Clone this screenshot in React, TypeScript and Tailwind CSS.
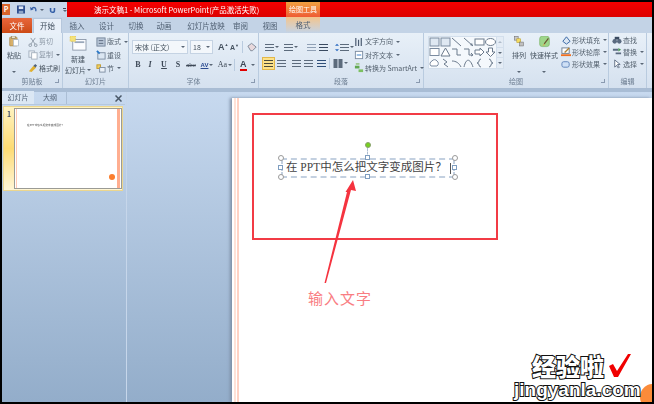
import React from "react";

const cjk = '"Noto Sans CJK SC","Liberation Sans",sans-serif';

function Ico({ w = 10, h = 10, children }: { w?: number; h?: number; children: React.ReactNode }) {
  return (
    <svg width={w} height={h} viewBox="0 0 11 11" className="shrink-0">
      {children}
    </svg>
  );
}

function Caret() {
  return <span className="inline-block w-0 h-0 border-x-[2px] border-x-transparent border-t-[2px] border-t-[#5a6776] shrink-0" />;
}

function SmallBtn({ icon, label, caret, h = "h-[14px]" }: { icon: React.ReactNode; label: string; caret?: boolean; h?: string }) {
  return (
    <div className={`flex items-center gap-[1px] ${h}`}>
      {icon}
      <span className="whitespace-nowrap">{label}</span>
      {caret && <span className="ml-[2px] flex"><Caret /></span>}
    </div>
  );
}

function Group({ w, label, launcher, children }: { w: string; label: string; launcher?: boolean; children: React.ReactNode }) {
  return (
    <div className={`${w} shrink-0 h-full flex flex-col border-r border-r-[#b9cbdf]`}>
      <div className="flex-1 flex min-h-0">{children}</div>
      <div className="h-[13px] flex items-center justify-center relative text-[7px] text-[#6b7c90]">
        {label}
        {launcher && <span className="absolute right-[3px] top-[4px] w-[4px] h-[4px] border-r border-b border-[#8a9ab0]" />}
      </div>
    </div>
  );
}

const Lines = ({ c = "#5c6b7c" }: { c?: string }) => (
  <svg width="9" height="9" viewBox="0 0 9 9" className="shrink-0">
    <path d="M0 1.500h9M0 4.500h9M0 7.500h9" stroke={c} strokeWidth="1.2" />
  </svg>
);

const tabs = [
  ["插入", "w-[30px]"],
  ["设计", "w-[29px]"],
  ["切换", "w-[30px]"],
  ["动画", "w-[26px]"],
  ["幻灯片放映", "w-[40px] ml-[9px]"],
  ["审阅", "w-[29px]"],
  ["视图", "w-[30px]"],
];

function TitleBar() {
  return (
    <div className="h-[15px] flex shrink-0">
      <div className="w-[65px] bg-[#c9d8ea] flex items-center">
        <div className="w-[8px] h-[11px] bg-[#d9642a] text-white text-[7px] leading-[11px] text-center font-bold">P</div>
        <svg width="8" height="9" viewBox="0 0 9 9" className="ml-[7px]"><rect width="9" height="9" fill="#2f4f8f" /><rect x="2" y="1" width="5" height="3" fill="#dfe8f5" /><rect x="2" y="6" width="5" height="3" fill="#8fa6c8" /></svg>
        <svg width="8" height="9" viewBox="0 0 11 9" className="ml-[5px]"><path d="M2 4c2-3 5-3 6 0v3" stroke="#3560a8" strokeWidth="1.8" fill="none" /><path d="M0 1l1 5 4-2z" fill="#3560a8" /></svg>
        <span className="ml-[2px] flex"><Caret /></span>
        <svg width="7" height="8" viewBox="0 0 9 9" className="ml-[5px]"><path d="M2 2v3a2.500 2.500 0 0 0 5 0V2" stroke="#3560a8" strokeWidth="2" fill="none" /></svg>
        <div className="ml-[6px] w-[5px] h-[10px] flex flex-col items-center justify-center gap-[1px]"><span className="w-[3px] h-[1px] bg-[#445]" /><Caret /></div>
      </div>
      <div className="flex-1 bg-gradient-to-b from-[#f50000] to-[#dc0000] flex text-white text-[7.500px]">
        <span className="ml-[27px] leading-[15px] whitespace-nowrap w-[192px]">演示文稿1 - Microsoft PowerPoint(产品激活失败)</span>
        <span className="w-[34px] text-center leading-[15px] text-[7px] bg-gradient-to-b from-[#f0a040] to-[#ee5a34]">绘图工具</span>
      </div>
    </div>
  );
}

function Tabs() {
  return (
    <div className="h-[16px] bg-[#c3d3e6] flex items-end text-[7.500px] text-[#4f5f72] shrink-0">
      <div className="w-[30px] h-[15px] bg-gradient-to-b from-[#e8663a] to-[#cc4a14] text-white flex items-center justify-center rounded-t-[1px]">文件</div>
      <div className="w-[29px] h-[15px] ml-[1px] bg-[#e9f0f9] border-x border-t border-[#b6c7dc] flex items-center justify-center text-[#3f4c5c]">开始</div>
      {tabs.map(([t, c]) => (
        <div key={t} className={`${c} h-[15px] flex items-center justify-center`}>{t}</div>
      ))}
      <div className="w-[34px] h-[16px] ml-[1px] bg-gradient-to-b from-[#f3c48a] to-[#c3d3e6] flex items-center justify-center">格式</div>
    </div>
  );
}

function Ribbon() {
  return (
    <div className="h-[56px] bg-gradient-to-b from-[#e8f0f8] to-[#d5e1ef] border-b border-b-[#a9bcd3] flex text-[7px] text-[#55626f] shrink-0">
      <Group w="w-[61px]" label="剪贴板" launcher>
        <div className="w-[24px] flex flex-col items-center pt-[3px]">
          <svg width="16" height="17" viewBox="0 0 16 17"><rect x="1" y="2" width="12" height="14" rx="1" fill="#d8b06a" stroke="#a08040" /><rect x="4" y="0" width="6" height="4" fill="#e9e3cf" stroke="#8a7a50" /><rect x="7" y="6" width="8" height="10" fill="#fff" stroke="#9fb0c4" /></svg>
          <span className="mt-[3px] leading-[10px] text-[#45525f]">粘贴</span>
          <span className="mt-[5px]"><Caret /></span>
        </div>
        <div className="flex flex-col pt-[2px] ml-[2px] text-[#8c98a6]">
          <SmallBtn label="剪切" icon={<Ico><path d="M3 1l5 7M8 1L3 8" stroke="#8c98a6" /><circle cx="2.500" cy="9" r="1.500" fill="none" stroke="#8c98a6" /><circle cx="8.500" cy="9" r="1.500" fill="none" stroke="#8c98a6" /></Ico>} />
          <SmallBtn label="复制" caret icon={<Ico><rect x="1" y="1" width="6" height="7" fill="#eef2f7" stroke="#a3afbd" /><rect x="4" y="3" width="6" height="7" fill="#fff" stroke="#a3afbd" /></Ico>} />
          <div className="text-[#4c5864]"><SmallBtn label="格式刷" icon={<Ico><path d="M1 9l5-6 3 2-5 5z" fill="#e0b030" /><path d="M6 3l2-2 2 2-2 2z" fill="#50627a" /></Ico>} /></div>
        </div>
      </Group>
      <Group w="w-[66px]" label="幻灯片">
        <div className="w-[30px] flex flex-col items-center pt-[3px]">
          <svg width="19" height="17" viewBox="0 0 19 17"><rect x="3" y="4" width="15" height="12" fill="#fbfcfe" stroke="#8a97a8" /><rect x="5" y="6" width="11" height="2" fill="#9aa8ba" /><rect x="0" y="0" width="6" height="6" fill="#f4e27a" stroke="#e6c43c" strokeDasharray="1 1" /></svg>
          <span className="mt-[3px] leading-[10px] text-[#45525f]">新建</span>
          <span className="leading-[10px] mt-[1px] whitespace-nowrap flex items-center gap-[1px] text-[#45525f]">幻灯片<Caret /></span>
        </div>
        <div className="flex flex-col pt-[2px] ml-[3px]">
          <SmallBtn label="版式" caret icon={<Ico><rect x="1" y="1" width="9" height="9" fill="#b9c7d8" stroke="#75859a" /><path d="M3 4h5M3 7h5" stroke="#56667a" /></Ico>} />
          <SmallBtn label="重设" icon={<Ico><rect x="2" y="3" width="8" height="7" fill="#dbe6f2" stroke="#7b8ba0" /><path d="M1 1l3 3" stroke="#2a78c8" strokeWidth="2" /></Ico>} />
          <SmallBtn label="节" caret icon={<Ico><rect x="1" y="2" width="4" height="4" fill="#f0d060" stroke="#c09a30" /><rect x="4" y="5" width="6" height="5" fill="#eaf0f7" stroke="#7b8ba0" /></Ico>} />
        </div>
      </Group>
      <Group w="w-[130px]" label="字体" launcher>
        <div className="flex flex-col pl-[3px] pt-[7px] gap-[5px]">
          <div className="flex items-center h-[14px]">
            <div className="w-[56px] h-[14px] bg-[#f3f7fb] border border-[#c5d3e3] flex items-center justify-between px-[2px] text-[#45525f]">宋体 (正文)<Caret /></div>
            <div className="w-[23px] h-[14px] ml-[2px] bg-[#f3f7fb] border border-[#c5d3e3] flex items-center justify-between px-[2px] text-[#45525f]">18<Caret /></div>
            <span className="ml-[5px] w-[11px] text-[9px] leading-none font-bold text-[#45525f]" style={{ fontFamily: "Liberation Sans" }}>A<span className="align-top text-[4px]">▲</span></span>
            <span className="ml-[1px] w-[9px] text-[7px] leading-none font-bold text-[#45525f]" style={{ fontFamily: "Liberation Sans" }}>A<span className="align-top text-[4px]">▼</span></span>
            <span className="ml-[3px] w-px h-[12px] bg-[#b9cbdf]" />
            <svg width="11" height="11" viewBox="0 0 12 11" className="ml-[4px]"><path d="M1 4l4-3 5 4-4 4H4z" fill="#e9d9dc" stroke="#7b8796" /></svg>
          </div>
          <div className="flex items-center h-[12px] font-bold text-[8px] text-[#3d4856]" style={{ fontFamily: "Liberation Serif" }}>
            <span className="w-[12px] text-center">B</span>
            <span className="w-[12px] text-center italic">I</span>
            <span className="w-[16px] text-center underline">U</span>
            <span className="w-[12px] text-center">S</span>
            <span className="w-[14px] text-center line-through text-[7px] font-normal">abc</span>
            <span className="w-[18px] flex items-center justify-center gap-[1px] text-[6px] text-[#2a4a90] underline" style={{ fontFamily: "Liberation Sans" }}>AV<Caret /></span>
            <span className="w-[18px] flex items-center justify-center gap-[1px] text-[8px] font-normal">Aa<Caret /></span>
            <span className="w-px h-[12px] bg-[#b9cbdf]" />
            <span className="flex items-center gap-[4px] text-[9px] ml-[5px] text-[#3d4856]" style={{ fontFamily: "Liberation Sans" }}><span className="border-b-[2px] border-[#e00000] leading-[9px]">A</span><Caret /></span>
          </div>
        </div>
      </Group>
      <Group w="w-[165px]" label="段落" launcher>
        <div className="flex flex-col pl-[3px] pt-[9px] gap-[4px] w-[95px] shrink-0">
          <div className="flex items-center h-[10px] pl-[3px]">
            <Lines /><span className="ml-[1px] flex"><Caret /></span>
            <span className="ml-[5px] flex"><Lines /></span><span className="ml-[1px] flex"><Caret /></span>
            <span className="ml-[5px] w-px h-[11px] bg-[#b9cbdf]" />
            <span className="ml-[4px] flex"><Lines c="#8fa0b5" /></span>
            <span className="ml-[3px] flex"><Lines c="#3a4a60" /></span>
            <span className="ml-[4px] w-px h-[11px] bg-[#b9cbdf]" />
            <span className="ml-[3px] flex items-center gap-[1px]"><svg width="4" height="11" viewBox="0 0 6 11"><path d="M3 0l3 3H0zM3 11l3-3H0z" fill="#2a6ac0" /></svg><Lines /><Caret /></span>
          </div>
          <div className="flex items-center h-[14px]">
            <span className="w-[13px] h-[13px] bg-[#fde28a] border border-[#e2b84a] flex items-center justify-center"><Lines c="#4a4a3a" /></span>
            <span className="ml-[2px] flex"><Lines /></span>
            <span className="ml-[6px] flex"><Lines /></span>
            <span className="ml-[3px] flex"><Lines /></span>
            <span className="ml-[4px] flex"><Lines c="#2f4f78" /></span>
            <span className="ml-[3px] w-px h-[11px] bg-[#b9cbdf]" />
            <span className="ml-[3px] flex items-center gap-[1px]"><svg width="10" height="9" viewBox="0 0 9 9"><path d="M0 0h4v9H0zM5 0h4v9H5z" fill="#5c6b7c" /></svg><Caret /></span>
          </div>
        </div>
        <div className="flex flex-col pt-[2px]">
          <SmallBtn label="文字方向" caret icon={<Ico><path d="M2 1v9M5 3v7M8 1v9" stroke="#4a5a70" strokeWidth="1.3" /></Ico>} />
          <SmallBtn label="对齐文本" caret icon={<Ico><rect x="1.500" y="1.500" width="8" height="8" fill="#fff" stroke="#7b8ba0" /><path d="M3 5.500h5" stroke="#2a78c8" /></Ico>} />
          <SmallBtn label="转换为 SmartArt" caret icon={<Ico><rect x="1" y="3" width="5" height="3" fill="#60a850" /><rect x="5" y="7" width="5" height="3" fill="#7cc060" /><rect x="2" y="0" width="4" height="2" fill="#a0c890" /></Ico>} />
        </div>
      </Group>
      <Group w="w-[185px]" label="绘图" launcher>
        <div className="pl-[4px] pt-[3px] flex shrink-0">
          <div className="w-[69px] h-[33px] bg-[#f4f8fc] border border-[#d3dfec] grid grid-cols-6 grid-rows-3 place-items-center">
            <svg width="11" height="10"><rect x="1" y="1" width="9" height="8" fill="#dfe8f2" stroke="#7b8ba0" /></svg>
            <svg width="11" height="10"><rect x="1" y="1" width="9" height="8" fill="#dfe8f2" stroke="#7b8ba0" /></svg>
            <svg width="11" height="10"><path d="M1 1l9 8" stroke="#6b7a8c" /></svg>
            <svg width="11" height="10"><path d="M1 1l9 8" stroke="#6b7a8c" /><path d="M10 9l-3-1 2-2z" fill="#6b7a8c" /></svg>
            <svg width="11" height="10"><rect x="1" y="2" width="9" height="6" fill="#fff" stroke="#6b7a8c" /></svg>
            <svg width="11" height="10"><ellipse cx="5.500" cy="5" rx="5" ry="3.500" fill="#fff" stroke="#6b7a8c" /></svg>
            <svg width="11" height="10"><rect x="1" y="1.500" width="9" height="7" fill="#fff" stroke="#7b8ba0" /></svg>
            <svg width="11" height="10"><path d="M5.500 1l4.500 8H1z" fill="#fff" stroke="#6b7a8c" /></svg>
            <svg width="11" height="10"><path d="M1 2h5v6h4" fill="none" stroke="#6b7a8c" /></svg>
            <svg width="11" height="10"><path d="M1 2h5v6h4M8 6l2 2-2 1" fill="none" stroke="#6b7a8c" /></svg>
            <svg width="11" height="10"><path d="M1 3h5V1l4 4-4 4V7H1z" fill="#fff" stroke="#6b7a8c" /></svg>
            <svg width="11" height="10"><path d="M3.500 1h4v4H10L5.500 9.500 1 5h2.500z" fill="#fff" stroke="#6b7a8c" /></svg>
            <svg width="11" height="10"><path d="M2 8a3 3 0 0 1 1-5 3 3 0 0 1 5 0 3 3 0 0 1 0 5z" fill="#fff" stroke="#7b8ba0" /></svg>
            <svg width="11" height="10"><path d="M3 1l4 3-3 2 4 3" fill="none" stroke="#6b7a8c" /></svg>
            <svg width="11" height="10"><path d="M1 3c4 0 7 2 9 6" fill="none" stroke="#6b7a8c" /></svg>
            <svg width="11" height="10"><path d="M1 9c2-9 6-9 9 0" fill="none" stroke="#6b7a8c" /></svg>
            <svg width="11" height="10"><path d="M7 1C4 1 6 5 3 5c3 0 1 4 4 4" fill="none" stroke="#6b7a8c" /></svg>
            <svg width="11" height="10"><path d="M4 1c3 0 1 4 4 4-3 0-1 4-4 4" fill="none" stroke="#6b7a8c" /></svg>
          </div>
          <div className="w-[7px] h-[33px] flex flex-col border-y border-r border-[#d3dfec] bg-[#e4ecf5]">
            <div className="flex-1 flex items-center justify-center border-b border-[#d3dfec]"><span className="w-0 h-0 border-x-[2px] border-x-transparent border-b-[2px] border-b-[#b0bccb]" /></div>
            <div className="flex-1 flex items-center justify-center border-b border-[#d3dfec]"><Caret /></div>
            <div className="flex-1 flex items-center justify-center"><Caret /></div>
          </div>
        </div>
        <div className="w-[20px] flex flex-col items-center pt-[3px] ml-[5px] shrink-0">
          <svg width="18" height="17" viewBox="0 0 18 19"><rect x="0.500" y="0.500" width="7" height="7" fill="#c8c8c8" stroke="#707070" /><rect x="5" y="5" width="7" height="7" fill="#f4dc60" stroke="#b89a30" /><rect x="10" y="11" width="7" height="7" fill="#c0c0c0" stroke="#707070" /></svg>
          <span className="mt-[3px] leading-[10px] text-[#45525f]">排列</span>
          <span className="mt-[5px]"><Caret /></span>
        </div>
        <div className="w-[28px] flex flex-col items-center pt-[3px] ml-[1px] shrink-0">
          <svg width="17" height="18" viewBox="0 0 17 19"><rect x="0.500" y="0.500" width="16" height="17" rx="4" fill="#9ed68a" stroke="#74b060" /><path d="M15 4L8 13" stroke="#6a5030" strokeWidth="2" /><path d="M8 13l-3 3 4-1z" fill="#e0a040" /></svg>
          <span className="mt-[2px] leading-[10px] whitespace-nowrap text-[#45525f]">快速样式</span>
          <span className="mt-[5px]"><Caret /></span>
        </div>
        <div className="flex flex-col pt-[1px] ml-[3px] shrink-0">
          <SmallBtn h="h-[12px]" label="形状填充" caret icon={<Ico><path d="M2 7l4-5 4 5-4 3z" fill="#dbe6f2" stroke="#3060a0" /></Ico>} />
          <SmallBtn h="h-[12px]" label="形状轮廓" caret icon={<Ico><rect x="1" y="1" width="8" height="6" fill="#fff" stroke="#6b7a8c" /><path d="M4 6l5-5" stroke="#b08030" strokeWidth="1.500" /><rect x="0" y="8" width="11" height="2" fill="#f07020" /></Ico>} />
          <SmallBtn h="h-[12px]" label="形状效果" caret icon={<Ico><rect x="1" y="3" width="8" height="6" rx="2" fill="#cfe0f5" stroke="#5a80b8" /></Ico>} />
        </div>
      </Group>
      <Group w="w-[38px]" label="编辑">
        <div className="flex flex-col pt-[1px] pl-[3px]">
          <SmallBtn h="h-[12px]" label="查找" icon={<Ico><circle cx="3" cy="7" r="2.500" fill="#5a6a80" /><circle cx="8" cy="7" r="2.500" fill="#5a6a80" /><rect x="3" y="2" width="5" height="3" fill="#3a4a60" /></Ico>} />
          <SmallBtn h="h-[12px]" label="替换" caret icon={<Ico><path d="M1 3h6M4 7h6" stroke="#5a6a80" strokeWidth="2" /><path d="M7 1l3 2-3 2" fill="#4a9a50" /></Ico>} />
          <SmallBtn h="h-[12px]" label="选择" caret icon={<Ico><path d="M3 1v8l2-2 2 3 1-1-2-3h3z" fill="#fff" stroke="#5a6a80" /></Ico>} />
        </div>
      </Group>
    </div>
  );
}

function Pane() {
  return (
    <div className="w-[123px] shrink-0 flex flex-col">
      <div className="h-[13px] flex items-end text-[7px] text-[#4f5f72] relative border-b border-[#b5c8de]">
        <div className="w-[32px] h-[13px] bg-[#dbe7f4] flex items-center justify-center">幻灯片</div>
        <div className="w-[33px] h-[13px] border-r border-[#abbed5] flex items-center justify-center">大纲</div>
        <svg width="7" height="7" viewBox="0 0 7 7" className="absolute right-[3px] top-[3px]"><path d="M0.500 0.500l6 6M6.500 0.500l-6 6" stroke="#4a5868" strokeWidth="1.500" /></svg>
      </div>
      <div className="ml-[1px] mt-[1px] w-[120px] h-[85px] bg-gradient-to-b from-[#fff3c0] via-[#fedb72] to-[#fff6d6] border border-[#ecd68e] flex pt-[1px] pl-[3px]">
        <span className="w-[7px] text-[7px] font-bold text-[#44506a] leading-[12px]">1</span>
        <div className="w-[108px] h-[81px] bg-white border border-[#9b9b95] relative">
          <span className="absolute left-[1px] top-0 bottom-0 w-[1px] bg-[#ffc9b5]" />
          <span className="absolute right-[1px] top-0 bottom-0 w-[3px] bg-[#ffae90]" />
          <span className="absolute left-[12px] top-[15px] text-[2.700px] leading-[3px] whitespace-nowrap text-[#444]">在PPT中怎么把文字变成图片？</span>
          <span className="absolute right-[6px] bottom-[8px] w-[6px] h-[6px] rounded-full bg-[#fb7d2d]" />
        </div>
      </div>
    </div>
  );
}

function Slide() {
  return (
    <div className="ml-[104px] mt-[6px] flex-1 bg-white relative shadow-[-2px_0_3px_#7d8fa6]">
      <span className="absolute left-[2px] top-0 bottom-0 w-[2px] bg-[#ffe3d9]" />
      <span className="absolute left-[5px] top-0 bottom-0 w-[2px] bg-[#ffd2c4]" />
      <div className="absolute left-[20px] top-[15px] w-[246px] h-[127px] border-2 border-[#f23b45]" />
      <div className="absolute left-[49px] top-[60px] w-[174px] h-[20px] border-2 border-dashed border-[#c3d0e0] flex items-center pl-[3px] text-[11.500px] leading-none whitespace-nowrap text-[#444]" style={{ fontFamily: '"Liberation Serif","Noto Sans CJK SC",serif' }}>
        <span>在 PPT中怎么把文字变成图片？</span>
        <span className="w-[1.500px] h-[11px] bg-[#555] ml-[3px]" />
      </div>
      <span className="absolute left-[135px] top-[50px] w-px h-[10px] border-l border-dashed border-[#aebed2]" />
      <span className="absolute left-[133px] top-[44px] w-[6px] h-[6px] rounded-full bg-[#76d11f] border border-[#8aa070]" />
      {[[46, 57], [220, 57], [46, 76], [220, 76]].map(([x, y]) => (
        <span key={`${x}-${y}`} className="absolute w-[6px] h-[6px] rounded-full bg-white border border-[#9a9a9a]" style={{ left: x, top: y }} />
      ))}
      {[[133, 57], [133, 76], [46, 67], [220, 67]].map(([x, y]) => (
        <span key={`${x}-${y}`} className="absolute w-[5px] h-[5px] bg-white border border-[#7f9ec0]" style={{ left: x, top: y }} />
      ))}
      <svg className="absolute left-[85px] top-[78px]" width="50" height="112" viewBox="0 0 50 112">
        <path d="M36 4L39 15 34 14 9 107 7.500 107 30 16 28.500 16z" fill="#f5333f" />
      </svg>
      <span className="absolute left-[76px] top-[190px] text-[15px] leading-[20px] tracking-[1px] text-[#f97d82] whitespace-nowrap">输入文字</span>
    </div>
  );
}

export default function App() {
  return (
    <div className="w-[654px] h-[404px] bg-black pt-[2px] pb-[2px] px-[2px] overflow-hidden relative" style={{ fontFamily: cjk }}>
      <div className="w-[650px] h-[400px] flex flex-col overflow-hidden relative">
        <div className="flex flex-col shrink-0 blur-[0.4px]">
          <TitleBar />
          <Tabs />
          <Ribbon />
        </div>
        <div className="h-[3px] bg-[#a9bdd5] shrink-0" />
        <div className="flex-1 flex min-h-0 bg-gradient-to-b from-[#c7d9ef] to-[#93adca]">
          <div className="blur-[0.3px] flex">
            <Pane />
          </div>
          <div className="w-[3px] shrink-0 flex justify-center"><span className="w-[1.500px] h-full bg-[#c6d6ea]" /></div>
          <div className="flex-1 flex flex-col overflow-hidden">
            <Slide />
          </div>
        </div>
        <span className="absolute left-[638px] top-[382px] w-[26px] h-[26px] rounded-full bg-[#fb8b3a]" />
        <div className="absolute left-[512px] top-[349px] flex flex-col items-start">
          <div className="flex items-center h-[29px]">
            <span className="ml-[18px] text-[24px] leading-[24px] font-black text-white [-webkit-text-stroke:2px_#111] [paint-order:stroke_fill]">经验啦</span>
            <svg width="24" height="24" viewBox="0 0 24 24" className="ml-[4px]"><path d="M1 12l4-2 4 7L20 0h3L10 23H6z" fill="#f00000" /></svg>
          </div>
          <span className="text-[19px] leading-[19px] font-bold text-white [-webkit-text-stroke:2px_#111] [paint-order:stroke_fill]" style={{ fontFamily: '"Liberation Sans",sans-serif' }}>jingyanla.com</span>
        </div>
      </div>
    </div>
  );
}
